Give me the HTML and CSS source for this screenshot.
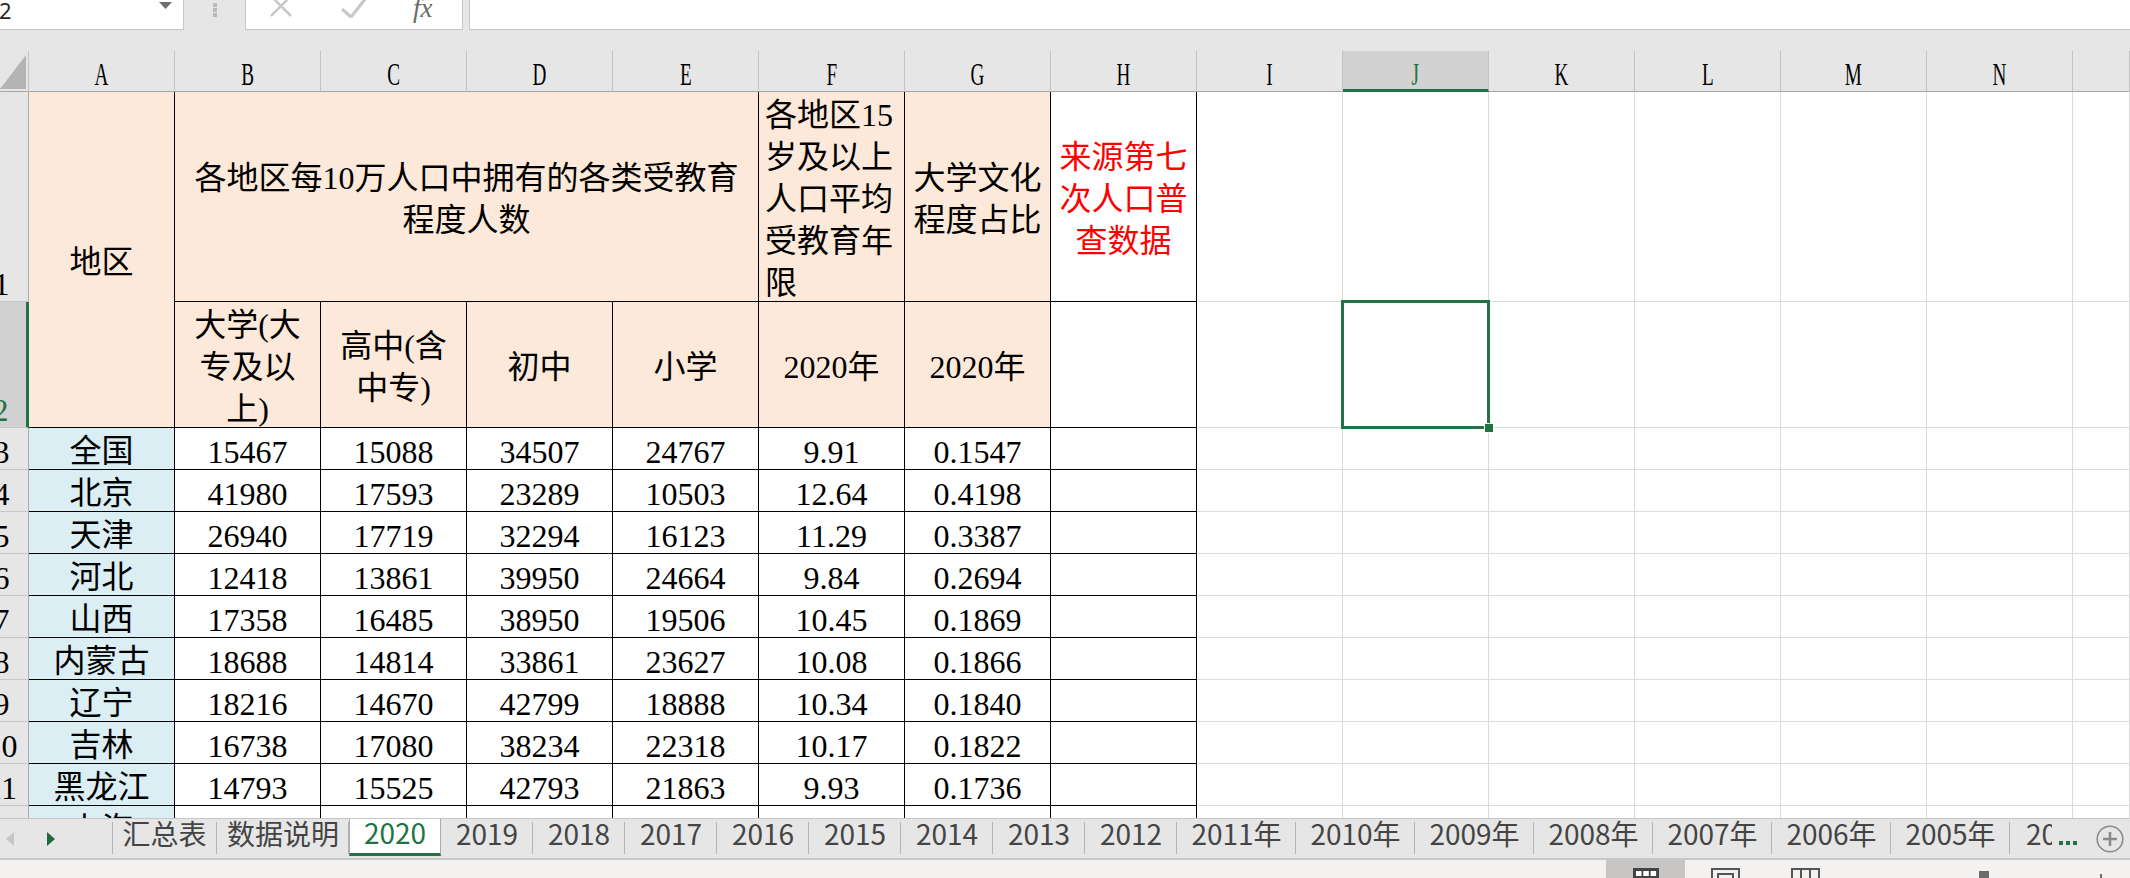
FILE: index.html
```html
<!DOCTYPE html>
<html lang="zh-CN">
<head>
<meta charset="utf-8">
<title>2020 - 第七次人口普查受教育程度</title>
<link rel="stylesheet" href="styles.css">
</head>
<body>
<div class="fbar">
  <div class="namebox"><span class="nb-text">2</span><svg class="nb-arrow" width="13" height="7" viewBox="0 0 13 7"><path d="M0 0H13L6.5 7Z" fill="#6e6e6e"/></svg></div>
  <div class="fb-dots"><i></i><i></i><i></i></div>
  <div class="fb-btns">
    <svg class="ic-x" width="24" height="24" viewBox="0 0 24 24"><path d="M2 2L22 22M22 2L2 22" stroke="#c8c8c8" stroke-width="2.5" fill="none"/></svg>
    <svg class="ic-ok" width="26" height="20" viewBox="0 0 26 20"><path d="M1 11L10 19L25 0" fill="none" stroke="#c8c8c8" stroke-width="3.2"/></svg>
    <span class="fx">fx</span>
  </div>
  <div class="fb-input"></div>
</div>

<div class="sheet">
  <div class="c corner"><svg width="28" height="40" viewBox="0 0 28 40"><path d="M0 38H26V4Z" fill="#b4b4b4"/></svg></div>
  <div class="c ch"><span>A</span></div>
  <div class="c ch"><span>B</span></div>
  <div class="c ch"><span>C</span></div>
  <div class="c ch"><span>D</span></div>
  <div class="c ch"><span>E</span></div>
  <div class="c ch"><span>F</span></div>
  <div class="c ch"><span>G</span></div>
  <div class="c ch"><span>H</span></div>
  <div class="c ch"><span>I</span></div>
  <div class="c ch selc"><span>J</span></div>
  <div class="c ch"><span>K</span></div>
  <div class="c ch"><span>L</span></div>
  <div class="c ch"><span>M</span></div>
  <div class="c ch"><span>N</span></div>
  <div class="c ch"></div>

  <!-- row 1 -->
  <div class="c rh"><span>1</span></div>
  <div class="c t pk r2 cjk">地区</div>
  <div class="c t pk c4 cjk">各地区每10万人口中拥有的各类受教育<br>程度人数</div>
  <div class="c t pk left cjk">各地区15<br>岁及以上<br>人口平均<br>受教育年<br>限</div>
  <div class="c t pk cjk">大学文化<br>程度占比</div>
  <div class="c t red cjk">来源第七<br>次人口普<br>查数据</div>
  <div class="c g"></div><div class="c g"></div><div class="c g"></div><div class="c g"></div><div class="c g"></div><div class="c g"></div><div class="c g"></div>

  <!-- row 2 -->
  <div class="c rh selr"><span>2</span></div>
  <div class="c t pk cjk">大学(大<br>专及以<br>上)</div>
  <div class="c t pk cjk">高中(含<br>中专)</div>
  <div class="c t pk cjk">初中</div>
  <div class="c t pk cjk">小学</div>
  <div class="c t pk cjk">2020年</div>
  <div class="c t pk cjk">2020年</div>
  <div class="c t"></div>
  <div class="c g"></div>
  <div class="c g sel"><span class="handle"></span></div>
  <div class="c g"></div><div class="c g"></div><div class="c g"></div><div class="c g"></div><div class="c g"></div>

  <!-- row 3 -->
  <div class="c rh"><span>3</span></div>
  <div class="c t bl cjk">全国</div>
  <div class="c t num">15467</div><div class="c t num">15088</div><div class="c t num">34507</div><div class="c t num">24767</div><div class="c t num">9.91</div><div class="c t num">0.1547</div>
  <div class="c t"></div>
  <div class="c g"></div><div class="c g"></div><div class="c g"></div><div class="c g"></div><div class="c g"></div><div class="c g"></div><div class="c g"></div>

  <!-- row 4 -->
  <div class="c rh"><span>4</span></div>
  <div class="c t bl cjk">北京</div>
  <div class="c t num">41980</div><div class="c t num">17593</div><div class="c t num">23289</div><div class="c t num">10503</div><div class="c t num">12.64</div><div class="c t num">0.4198</div>
  <div class="c t"></div>
  <div class="c g"></div><div class="c g"></div><div class="c g"></div><div class="c g"></div><div class="c g"></div><div class="c g"></div><div class="c g"></div>

  <!-- row 5 -->
  <div class="c rh"><span>5</span></div>
  <div class="c t bl cjk">天津</div>
  <div class="c t num">26940</div><div class="c t num">17719</div><div class="c t num">32294</div><div class="c t num">16123</div><div class="c t num">11.29</div><div class="c t num">0.3387</div>
  <div class="c t"></div>
  <div class="c g"></div><div class="c g"></div><div class="c g"></div><div class="c g"></div><div class="c g"></div><div class="c g"></div><div class="c g"></div>

  <!-- row 6 -->
  <div class="c rh"><span>6</span></div>
  <div class="c t bl cjk">河北</div>
  <div class="c t num">12418</div><div class="c t num">13861</div><div class="c t num">39950</div><div class="c t num">24664</div><div class="c t num">9.84</div><div class="c t num">0.2694</div>
  <div class="c t"></div>
  <div class="c g"></div><div class="c g"></div><div class="c g"></div><div class="c g"></div><div class="c g"></div><div class="c g"></div><div class="c g"></div>

  <!-- row 7 -->
  <div class="c rh"><span>7</span></div>
  <div class="c t bl cjk">山西</div>
  <div class="c t num">17358</div><div class="c t num">16485</div><div class="c t num">38950</div><div class="c t num">19506</div><div class="c t num">10.45</div><div class="c t num">0.1869</div>
  <div class="c t"></div>
  <div class="c g"></div><div class="c g"></div><div class="c g"></div><div class="c g"></div><div class="c g"></div><div class="c g"></div><div class="c g"></div>

  <!-- row 8 -->
  <div class="c rh"><span>8</span></div>
  <div class="c t bl cjk">内蒙古</div>
  <div class="c t num">18688</div><div class="c t num">14814</div><div class="c t num">33861</div><div class="c t num">23627</div><div class="c t num">10.08</div><div class="c t num">0.1866</div>
  <div class="c t"></div>
  <div class="c g"></div><div class="c g"></div><div class="c g"></div><div class="c g"></div><div class="c g"></div><div class="c g"></div><div class="c g"></div>

  <!-- row 9 -->
  <div class="c rh"><span>9</span></div>
  <div class="c t bl cjk">辽宁</div>
  <div class="c t num">18216</div><div class="c t num">14670</div><div class="c t num">42799</div><div class="c t num">18888</div><div class="c t num">10.34</div><div class="c t num">0.1840</div>
  <div class="c t"></div>
  <div class="c g"></div><div class="c g"></div><div class="c g"></div><div class="c g"></div><div class="c g"></div><div class="c g"></div><div class="c g"></div>

  <!-- row 10 -->
  <div class="c rh"><span>10</span></div>
  <div class="c t bl cjk">吉林</div>
  <div class="c t num">16738</div><div class="c t num">17080</div><div class="c t num">38234</div><div class="c t num">22318</div><div class="c t num">10.17</div><div class="c t num">0.1822</div>
  <div class="c t"></div>
  <div class="c g"></div><div class="c g"></div><div class="c g"></div><div class="c g"></div><div class="c g"></div><div class="c g"></div><div class="c g"></div>

  <!-- row 11 -->
  <div class="c rh"><span>11</span></div>
  <div class="c t bl cjk">黑龙江</div>
  <div class="c t num">14793</div><div class="c t num">15525</div><div class="c t num">42793</div><div class="c t num">21863</div><div class="c t num">9.93</div><div class="c t num">0.1736</div>
  <div class="c t"></div>
  <div class="c g"></div><div class="c g"></div><div class="c g"></div><div class="c g"></div><div class="c g"></div><div class="c g"></div><div class="c g"></div>

  <!-- row 12 (partly hidden) -->
  <div class="c rh"><span>12</span></div>
  <div class="c t bl cjk">上海</div>
  <div class="c t"></div><div class="c t"></div><div class="c t"></div><div class="c t"></div><div class="c t"></div><div class="c t"></div>
  <div class="c t"></div>
  <div class="c g"></div><div class="c g"></div><div class="c g"></div><div class="c g"></div><div class="c g"></div><div class="c g"></div><div class="c g"></div>
</div>

<div class="tabbar">
  <div class="tnav">
    <svg width="8" height="14" viewBox="0 0 8 14"><path d="M8 0V14L0 7Z" fill="#c6c6c6"/></svg>
    <svg width="8" height="14" viewBox="0 0 8 14"><path d="M0 0L8 7L0 14Z" fill="#1e6b3c"/></svg>
  </div>
  <div class="tabs">
    <div class="tab first w105">汇总表</div>
    <div class="tab w132">数据说明</div>
    <div class="tab on w92">2020</div>
    <div class="tab w92">2019</div>
    <div class="tab w92">2018</div>
    <div class="tab w92">2017</div>
    <div class="tab w92">2016</div>
    <div class="tab w92">2015</div>
    <div class="tab w92">2014</div>
    <div class="tab w92">2013</div>
    <div class="tab w92">2012</div>
    <div class="tab w119">2011年</div>
    <div class="tab w119">2010年</div>
    <div class="tab w119">2009年</div>
    <div class="tab w119">2008年</div>
    <div class="tab w119">2007年</div>
    <div class="tab w119">2006年</div>
    <div class="tab w119">2005年</div>
    <div class="tab-more"><span class="clip">2004年</span><span class="ell"><i></i><i></i><i></i></span></div>
    <svg class="addsheet" width="28" height="28" viewBox="0 0 28 28"><circle cx="14" cy="14" r="12.8" fill="none" stroke="#8a8a8a" stroke-width="1.6"/><path d="M14 7V21M7 14H21" stroke="#8a8a8a" stroke-width="2.6"/></svg>
  </div>
</div>

<div class="status">
  <div class="vbtn on"><svg width="26" height="16" viewBox="0 0 26 16"><rect x="0" y="0" width="26" height="16" fill="#444"/><rect x="3" y="3" width="5.5" height="5" fill="#fff"/><rect x="10.3" y="3" width="5.5" height="5" fill="#fff"/><rect x="17.6" y="3" width="5.5" height="5" fill="#fff"/></svg></div>
  <div class="vbtn"><svg width="29" height="16" viewBox="0 0 29 16"><rect x="1" y="1" width="27" height="20" fill="none" stroke="#555" stroke-width="2"/><rect x="7" y="6" width="15" height="14" fill="none" stroke="#555" stroke-width="2"/></svg></div>
  <div class="vbtn"><svg width="29" height="16" viewBox="0 0 29 16"><rect x="1" y="1" width="27" height="20" fill="none" stroke="#555" stroke-width="2"/><path d="M10 1V16M19 1V16" stroke="#555" stroke-width="2"/></svg></div>
  <div class="zthumb"></div>
  <div class="ztick"></div>
</div>
</body>
</html>
```

FILE: styles.css
```css
* { box-sizing: border-box; }
html, body { margin: 0; padding: 0; }
body {
  width: 2130px;
  height: 878px;
  overflow: hidden;
  background: #e6e6e6;
  font-family: "Liberation Serif", "Noto Sans CJK SC", serif;
}

/* formula bar */
.fbar { display: flex; height: 30px; background: #e6e6e6; }
.namebox {
  width: 184px; height: 30px; background: #fff;
  border-right: 1px solid #c6c6c6; border-bottom: 1px solid #c6c6c6;
  display: flex; align-items: flex-start;
}
.nb-text { font: 22px/20px "Noto Sans", "Liberation Sans", sans-serif; color: #262626; margin-left: -1px; }
.nb-arrow { margin-left: auto; margin-right: 11px; margin-top: 2px; }
.fb-dots { width: 61px; display: flex; flex-direction: column; align-items: center; gap: 1px; padding-top: 3px; }
.fb-dots i { display: block; width: 4px; height: 4px; background: #b9b9b9; }
.fb-btns {
  width: 218px; height: 30px; background: #fff;
  border: 1px solid #c6c6c6; border-top: 0;
  display: flex; align-items: flex-start; overflow: hidden;
}
.ic-x { margin-left: 23px; margin-top: -6px; flex: none; }
.ic-ok { margin-left: 48px; margin-top: -2px; flex: none; }
.fx { margin-left: 46px; margin-top: -2px; font: italic 27px/20px "Liberation Serif", serif; color: #6b6b6b; }
.fb-input { flex: 1; height: 30px; margin-left: 6px; background: #fff; border-left: 1px solid #c6c6c6; border-bottom: 1px solid #c6c6c6; }

/* sheet grid */
.sheet {
  margin-top: 21px;
  height: 767px;
  overflow: hidden;
  display: grid;
  grid-template-columns: 29px repeat(14, 146px) 57px;
  grid-template-rows: 41px 210px 126px repeat(10, 42px);
  background: #fff;
  font-size: 32px;
  color: #000;
}
.c {
  border-right: 1px solid #dadada;
  border-bottom: 1px solid #dadada;
  display: flex;
  align-items: center;
  justify-content: center;
  text-align: center;
  line-height: 42px;
  white-space: nowrap;
}
.corner { background: #e6e6e6; border-right-color: #c3c3c3; border-bottom-color: #a6a6a6; display: block; }
.corner svg { display: block; }
.ch { background: #e6e6e6; border-right-color: #c3c3c3; border-bottom-color: #a6a6a6; padding-top: 5px; }
.ch span { display: inline-block; transform: scaleX(0.6); line-height: 32px; }
.ch.selc { background: #d2d2d2; color: #217346; border-bottom: 3px solid #217346; padding-top: 7px; }
.rh {
  background: #e6e6e6; border-right-color: #ababab; border-bottom-color: #c6c6c6;
  align-items: flex-end; overflow: hidden; padding-bottom: 1px;
}
.rh span { margin-right: 25px; line-height: 32px; flex: none; }
.rh.selr { background: #d2d2d2; color: #217346; border-right: 3px solid #217346; }

.t { border-right-color: #000; border-bottom-color: #000; }
.pk { background: #fde9d9; }
.bl { background: #daeef3; }
.r2 { grid-row: span 2; }
.c4 { grid-column: span 4; }
.left { justify-content: flex-start; text-align: left; padding-left: 6px; }
.red { color: #ff0000; }
.cjk { padding-top: 4px; }
.num { padding-top: 7px; }

.sel { position: relative; z-index: 2; }
.sel::after {
  content: "";
  position: absolute;
  left: -2px; top: -2px; right: -2px; bottom: -2px;
  border: 3px solid #217346;
}
.handle {
  position: absolute; right: -6px; bottom: -6px;
  width: 10px; height: 10px;
  background: #217346; border: 1px solid #fff;
  z-index: 3;
}

/* sheet tabs */
.tabbar {
  display: flex; height: 42px;
  border-top: 1px solid #c6c6c6; border-bottom: 2px solid #c8c8c8;
  background: #e6e6e6;
  font-family: "Noto Sans CJK SC", "Noto Sans", sans-serif;
}
.tnav { width: 112px; flex: none; display: flex; align-items: center; padding-left: 6px; gap: 33px; }
.tnav svg { display: block; }
.tabs { display: flex; height: 39px; align-items: flex-start; }
.tab {
  flex: none; height: 39px;
  display: flex; align-items: center; justify-content: center;
  padding-bottom: 11px;
  font-size: 28px; line-height: 1; color: #444;
  background: linear-gradient(#b4b4b4, #b4b4b4) right 0 top 3px / 1px 32px no-repeat;
}
.tab.first {
  background:
    linear-gradient(#b4b4b4, #b4b4b4) left 0 top 3px / 1px 32px no-repeat,
    linear-gradient(#b4b4b4, #b4b4b4) right 0 top 3px / 1px 32px no-repeat;
}
.tab.on {
  height: 37px; background: #fff; color: #217346;
  border-left: 1px solid #ababab; border-right: 1px solid #ababab;
  border-bottom: 3px solid #217346; padding-bottom: 8px;
}
.w92 { width: 92px; }
.w105 { width: 105px; }
.w119 { width: 119px; }
.w132 { width: 132px; }
.tab-more { display: flex; align-items: center; height: 39px; padding-left: 16px; padding-bottom: 11px; font-size: 28px; line-height: 1; color: #444; }
.clip { display: block; width: 26px; overflow: hidden; white-space: nowrap; }
.ell { display: flex; gap: 3px; margin-left: 7px; margin-top: 20px; }
.ell i { display: block; width: 4px; height: 4px; background: #217346; }
.addsheet { flex: none; margin-left: 19px; margin-top: 6px; }

/* status bar */
.status { height: 18px; background: #f3f2f1; display: flex; padding-left: 1606px; overflow: hidden; }
.vbtn { width: 80px; height: 18px; display: flex; justify-content: center; padding-top: 8px; flex: none; }
.vbtn.on { width: 79px; background: #c8c6c4; }
.vbtn svg { display: block; }
.zthumb { width: 10px; height: 10px; background: #6d6d6d; margin-left: 134px; margin-top: 11px; flex: none; }
.ztick { width: 2px; height: 8px; background: #6d6d6d; margin-left: 111px; margin-top: 14px; flex: none; }
```
